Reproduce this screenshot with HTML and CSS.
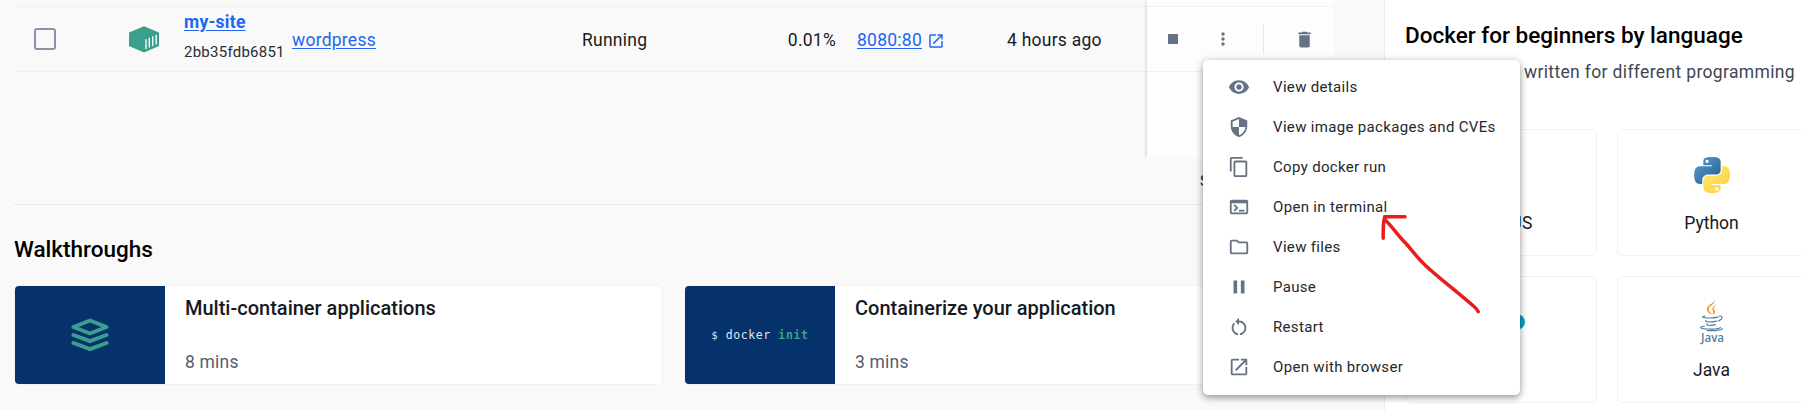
FILE: index.html
```
<!DOCTYPE html>
<html lang="en">
<head>
<meta charset="utf-8">
<title>Docker Desktop – Containers</title>
<link rel="stylesheet" href="styles.css">
</head>
<body>
<div class="app">
  <main class="main">
    <section class="table">
      <div class="spacer-row"></div>
      <div class="row">
        <div class="c-check"><span class="checkbox"></span></div>
        <div class="c-icon">
          <svg width="30" height="27" viewBox="0 0 30 27"><path d="M15 .3 30 6.4V20L15 26.4 0 20V6.400z" fill="#3a9f8c"/><path d="M17 13.200v9.800M20.300 11.800v9.800M23.700 10.300v9.800M27.200 8.800v9.800" stroke="#f9f9f9" stroke-width="1.400"/></svg>
        </div>
        <div class="c-name"><a class="link name">my-site</a><span class="hash">2bb35fdb6851</span></div>
        <div class="c-image"><a class="link">wordpress</a></div>
        <div class="c-status">Running</div>
        <div class="c-cpu">0.01%</div>
        <div class="c-port"><a class="link">8080:80</a>
          <svg class="ext" width="18" height="18" viewBox="0 0 24 24" fill="#2067f1"><path d="M19 19H5V5h7V3H5c-1.110 0-2 .9-2 2v14c0 1.100.89 2 2 2h14c1.100 0 2-.9 2-2v-7h-2v7zM14 3v2h3.590l-9.830 9.830 1.410 1.410L19 6.410V10h2V3h-7z"/></svg>
        </div>
        <div class="c-started">4 hours ago</div>
      </div>
      <div class="actions">
        <div class="actions-top"></div>
        <div class="actions-row">
          <svg class="a-stop" width="10" height="10"><path d="M0 0h10v10H0z" fill="#677285"/></svg>
          <svg class="a-more" width="20" height="20" viewBox="0 0 24 24" fill="#677285"><path d="M12 8c1.100 0 2-.9 2-2s-.9-2-2-2-2 .9-2 2 .9 2 2 2zm0 2c-1.100 0-2 .9-2 2s.9 2 2 2 2-.9 2-2-.9-2-2-2zm0 6c-1.100 0-2 .9-2 2s.9 2 2 2 2-.9 2-2-.9-2-2-2z"/></svg>
          <span class="a-sep"></span>
          <svg class="a-del" width="21" height="21" viewBox="0 0 24 24" fill="#677285"><path d="M6 19c0 1.100.9 2 2 2h8c1.100 0 2-.9 2-2V7H6v12zM19 4h-3.500l-1-1h-5l-1 1H5v2h14V4z"/></svg>
        </div>
      </div>
    </section>
    <div class="footer">Showing 1 item</div>
    <section class="walk">
      <h2 class="heading">Walkthroughs</h2>
      <div class="walk-cards">
        <article class="walk-card">
          <div class="thumb">
            <svg class="layers" width="38" height="34" viewBox="0 0 38 34" fill="none" stroke="#3a9f8c" stroke-width="4" stroke-linecap="round" stroke-linejoin="round"><path d="M19 2.500 35.500 9 19 15.500 2.500 9z"/><path d="M2.500 17 19 23.200 35.500 17M2.500 25 19 31.200 35.500 25"/></svg>
          </div>
          <div class="walk-body"><h3 class="walk-title">Multi-container applications</h3><p class="mins">8 mins</p></div>
        </article>
        <article class="walk-card">
          <div class="thumb"><code class="cmd"><span class="cmd-prompt">$</span> docker <span class="cmd-arg">init</span></code></div>
          <div class="walk-body"><h3 class="walk-title">Containerize your application</h3><p class="mins">3 mins</p></div>
        </article>
      </div>
    </section>
  </main>
  <aside class="side">
    <h2 class="heading">Docker for beginners by language</h2>
    <p class="side-text">Guides written for different programming</p>
    <div class="langs">
      <div class="lang"><span class="logo"></span><span class="lang-name">NodeJS</span></div>
      <div class="lang">
        <span class="logo"><svg width="36" height="36" viewBox="0 0 111 111">
          <defs>
            <linearGradient id="pb" x1="0" y1="0" x2="1" y2="1"><stop offset="0" stop-color="#5a9fd4"/><stop offset=".8" stop-color="#306998"/></linearGradient>
            <linearGradient id="py" x1="0" y1="0" x2="1" y2="1"><stop offset="0" stop-color="#ffe873"/><stop offset="1" stop-color="#ffd03b"/></linearGradient>
          </defs>
          <path fill="url(#pb)" d="M54.900 0C50.300 0 46 .4 42.100 1.100 30.800 3.100 28.700 7.300 28.700 15v10.200h26.800v3.400H18.700c-7.800 0-14.600 4.700-16.700 13.600-2.500 10.200-2.600 16.600 0 27.200 1.900 7.900 6.500 13.600 14.200 13.600h9.200V70.800c0-8.800 7.700-16.700 16.700-16.700h26.700c7.400 0 13.400-6.100 13.400-13.500V15c0-7.300-6.100-12.700-13.400-13.900C64.200.3 59.500 0 54.900 0zM40.400 8.200c2.800 0 5 2.300 5 5.100s-2.200 5.100-5 5.100-5-2.300-5-5.100 2.200-5.100 5-5.100z"/>
          <path fill="url(#py)" d="M85.600 28.700v11.900c0 9.200-7.800 17-16.700 17H42.100c-7.300 0-13.400 6.300-13.400 13.600v25.500c0 7.200 6.300 11.500 13.400 13.600 8.500 2.500 16.600 2.900 26.800 0 6.700-2 13.300-5.900 13.300-13.600V86.500H55.500v-3.400h40.100c7.800 0 10.700-5.400 13.400-13.600 2.800-8.400 2.700-16.500 0-27.200-1.900-7.700-5.600-13.600-13.400-13.600h-10zM70.600 93.300c2.800 0 5 2.300 5 5.100s-2.200 5.100-5 5.100-5-2.300-5-5.100 2.200-5.100 5-5.100z"/>
        </svg></span>
        <span class="lang-name">Python</span>
      </div>
      <div class="lang">
        <span class="logo"><svg width="46" height="18" viewBox="0 0 46 18"><ellipse cx="15" cy="9" rx="9" ry="8" fill="#00a2c7"/><ellipse cx="37" cy="9" rx="9" ry="8" fill="#00a2c7"/></svg></span>
        <span class="lang-name">Go</span>
      </div>
      <div class="lang">
        <span class="logo"><svg width="26" height="46" viewBox="0 0 26 46" fill="none">
          <path d="M15.500 0c1.300 3.400-2 5.200-4.500 7.600-3.500 3.400.5 5.300 1.500 8.400-3-2.200-6.500-5-3.500-8.600C11.500 4.700 16.300 3.600 15.500 0z" fill="#f0931c"/>
          <path d="M18.500 5.500c-4 1.300-6.300 3.100-4.500 6.300.9 1.600.3 3-1 4.600 3.300-1.700 3.800-3.600 2-6-1.200-1.700.8-3.600 3.500-4.900z" fill="#f0931c"/>
          <g stroke="#4f7f9f" stroke-width="1.100" stroke-linecap="round"><path d="M6 17c-3 .5-3.500 1.300 0 1.700 4 .4 9 .2 13-.6M20 17.200c4-1 4.500 3-.8 4.800M7 21.500c-2 1.500 5 2 10.500.6M8 25c-1.500 1.500 4.500 1.800 8.500.6M5.500 27.300c-6 .8-5 2.400 3 2.700 6 .3 12-.2 13-1.600M8 31.500c6 .4 12 .2 15.500-1.800"/></g>
          <text class="java-word" x="2" y="43" textLength="23" lengthAdjust="spacingAndGlyphs">Java</text>
        </svg></span>
        <span class="lang-name">Java</span>
      </div>
    </div>
  </aside>

  <ul class="menu">
    <li class="item"><svg class="ico" viewBox="0 0 24 24"><path d="M12 4.500C7 4.500 2.730 7.610 1 12c1.730 4.390 6 7.500 11 7.500s9.270-3.110 11-7.500c-1.730-4.390-6-7.500-11-7.500zM12 17c-2.760 0-5-2.240-5-5s2.240-5 5-5 5 2.240 5 5-2.240 5-5 5zm0-8c-1.660 0-3 1.340-3 3s1.340 3 3 3 3-1.340 3-3-1.340-3-3-3z"/></svg>View details</li>
    <li class="item"><svg class="ico" viewBox="0 0 24 24"><path d="M12 1 3 5v6c0 5.550 3.840 10.740 9 12 5.160-1.260 9-6.450 9-12V5l-9-4zm0 10.990h7c-.53 4.120-3.280 7.790-7 8.940V12H5V6.300l7-3.110v8.800z"/></svg>View image packages and CVEs</li>
    <li class="item"><svg class="ico" viewBox="0 0 24 24"><path d="M16 1H4c-1.100 0-2 .9-2 2v14h2V3h12V1zm3 4H8c-1.100 0-2 .9-2 2v14c0 1.100.9 2 2 2h11c1.100 0 2-.9 2-2V7c0-1.100-.9-2-2-2zm0 16H8V7h11v14z"/></svg>Copy docker run</li>
    <li class="item"><svg class="ico" viewBox="0 0 24 24"><path d="M20 4H4c-1.110 0-2 .9-2 2v12c0 1.100.89 2 2 2h16c1.100 0 2-.9 2-2V6c0-1.100-.89-2-2-2zm0 14H4V8h16v10zm-2-1h-6v-2h6v2zM7.500 17l-1.410-1.410L8.670 13l-2.590-2.590L7.500 9l4 4-4 4z"/></svg>Open in terminal</li>
    <li class="item"><svg class="ico" viewBox="0 0 24 24"><path d="M9.170 6l2 2H20v10H4V6h5.170M10 4H4c-1.100 0-1.990.9-1.990 2L2 18c0 1.100.9 2 2 2h16c1.100 0 2-.9 2-2V8c0-1.100-.9-2-2-2h-8l-2-2z"/></svg>View files</li>
    <li class="item"><svg class="ico" viewBox="0 0 24 24"><path d="M6 19h4V5H6v14zm8-14v14h4V5h-4z"/></svg>Pause</li>
    <li class="item"><svg class="ico" viewBox="0 0 24 24"><path d="M12 5V2L8 6l4 4V7c3.310 0 6 2.690 6 6 0 2.970-2.170 5.430-5 5.910v2.020c3.950-.49 7-3.850 7-7.930 0-4.420-3.580-8-8-8zM6 13c0-1.650.67-3.150 1.760-4.240L6.340 7.340C4.900 8.790 4 10.790 4 13c0 4.080 3.050 7.440 7 7.930v-2.020c-2.830-.48-5-2.940-5-5.910z"/></svg>Restart</li>
    <li class="item"><svg class="ico" viewBox="0 0 24 24"><path d="M19 19H5V5h7V3H5c-1.110 0-2 .9-2 2v14c0 1.100.89 2 2 2h14c1.100 0 2-.9 2-2v-7h-2v7zM14 3v2h3.590l-9.830 9.830 1.410 1.410L19 6.410V10h2V3h-7z"/></svg>Open with browser</li>
  </ul>

  <svg class="arrow" width="110" height="110" viewBox="1376 208 110 110"><path d="M1405 216.700h-20.500M1383.200 238.300c0-7-.2-14 1-19.300C1392 226 1398 236 1406 243.500c7 8 10 13 20 22.500 14 13 28 23 48 40.500q3.200 2.700 4.200 5.200"/></svg>
</div>
</body>
</html>
```
FILE: styles.css
```
* { box-sizing: border-box; margin: 0; padding: 0; }
body { font-family: Roboto, "Liberation Sans", sans-serif; background: #f9f9f9; overflow: hidden; }
.app { position: relative; display: flex; width: 1802px; height: 410px; overflow: hidden; font-size: 17.5px; color: #17191e; }
.main { width: 1384px; flex: none; padding-left: 14px; }

/* container table */
.table { position: relative; width: 1320px; height: 158px; }
.spacer-row { height: 7px; border-bottom: 1px solid #f1f1f2; }
.row { display: flex; align-items: center; height: 65px; border-bottom: 1px solid #f1f1f2; letter-spacing: .25px; }
.c-check { width: 115px; padding-left: 20px; }
.checkbox { display: block; width: 22px; height: 22px; border: 2px solid #8993a5; border-radius: 3px; }
.c-icon { width: 55px; height: 27px; }
.c-name { width: 108px; display: flex; flex-direction: column; padding-bottom: 1px; }
.name { font-weight: 700; line-height: 26px; }
.hash { font-size: 15px; line-height: 34px; letter-spacing: .25px; color: #2a2d33; }
.link { color: #2067f1; text-decoration: underline; text-underline-offset: 2px; }
.c-image { width: 290px; padding-top: 2px; }
.c-status { width: 140px; padding-top: 2px; }
.c-cpu { width: 114px; padding-top: 2px; text-align: right; }
.c-port { display: flex; align-items: center; width: 171px; padding: 2px 0 0 21px; gap: 5px; }
.c-started { padding-top: 2px; }
.ext { margin-top: 2px; }
.actions { position: absolute; left: 1133px; top: 0; width: 187px; height: 158px; background: #fdfdfd; box-shadow: -1px 0 4px -1px rgba(0, 0, 0, .22); clip-path: inset(0 0 0 -6px); }
.actions-top { height: 7px; border-bottom: 1px solid #f1f1f2; }
.actions-row { display: flex; align-items: center; height: 65px; padding-left: 21px; border-bottom: 1px solid #f1f1f2; }
.a-more { margin-left: 35px; }
.a-sep { width: 1px; height: 30px; margin-left: 30px; background: #e6e8ec; }
.a-del { margin-left: 30px; }
.footer { height: 47px; width: 1370px; padding-left: 1186px; border-bottom: 1px solid #e8e8e8; font-size: 15px; line-height: 46px; }

/* walkthroughs */
.heading { font-size: 22.500px; font-weight: 500; color: #000; line-height: 30px; }
.walk { padding-top: 29px; }
.walk-cards { display: flex; gap: 21px; margin-top: 21px; }
.walk-card { display: flex; flex: none; width: 649px; height: 100px; background: #fff; border: 1px solid #f2f2f3; border-radius: 5px; }
.thumb { width: 150px; height: 98px; display: flex; align-items: center; justify-content: center; background: #06326b; border-radius: 4px 0 0 4px; }
.cmd { font-family: "DejaVu Sans Mono", "Liberation Mono", monospace; font-size: 11.5px; letter-spacing: .6px; color: #dfe6ef; white-space: pre; }
.cmd-prompt { font-size: 10px; }
.cmd-arg { color: #3a9f8c; font-weight: 700; }
.walk-body { padding: 9px 20px; }
.walk-title { font-size: 20px; font-weight: 500; line-height: 27px; }
.mins { margin-top: 27px; line-height: 26px; letter-spacing: .2px; color: #545e6f; }

/* learning panel */
.side { flex: none; width: 440px; background: #fff; border-left: 1px solid #ececee; padding: 20px 0 0 20px; }
.side-text { margin-top: 8px; line-height: 28px; letter-spacing: .35px; width: 390px; direction: ltr; text-align: right; color: #3f4653; white-space: nowrap; }
.langs { display: grid; grid-template-columns: 191px 191px; gap: 20px; margin: 43px 0 0 1px; }
.lang { display: flex; flex-direction: column; align-items: center; height: 127px; border: 1px solid #f1f1f2; border-radius: 5px; }
.lang:nth-child(even) { padding-right: 2px; }
.logo { display: flex; align-items: center; justify-content: center; height: 46px; margin-top: 22px; }
.lang-name { line-height: 26px; margin-top: 12px; }
.java-word { font: 600 12px "Open Sans", sans-serif; fill: #4f7f9f; }

/* context menu */
.menu { position: absolute; left: 1203px; top: 60px; width: 317px; height: 335px; padding-top: 7px; list-style: none; background: #fff; border-radius: 5px; box-shadow: 0 3px 6px rgba(0, 0, 0, .28), 0 1px 10px rgba(0, 0, 0, .18); }
.item { display: flex; align-items: center; gap: 23px; height: 40px; padding-left: 25px; font-size: 15px; letter-spacing: .33px; color: #25282d; white-space: nowrap; }
.ico { width: 22px; height: 22px; fill: #677285; }

/* hand-drawn pointer over the menu */
.arrow { position: absolute; left: 1376px; top: 208px; fill: none; stroke: #eb1c1c; stroke-width: 3.500; stroke-linecap: round; stroke-linejoin: round; }
```
